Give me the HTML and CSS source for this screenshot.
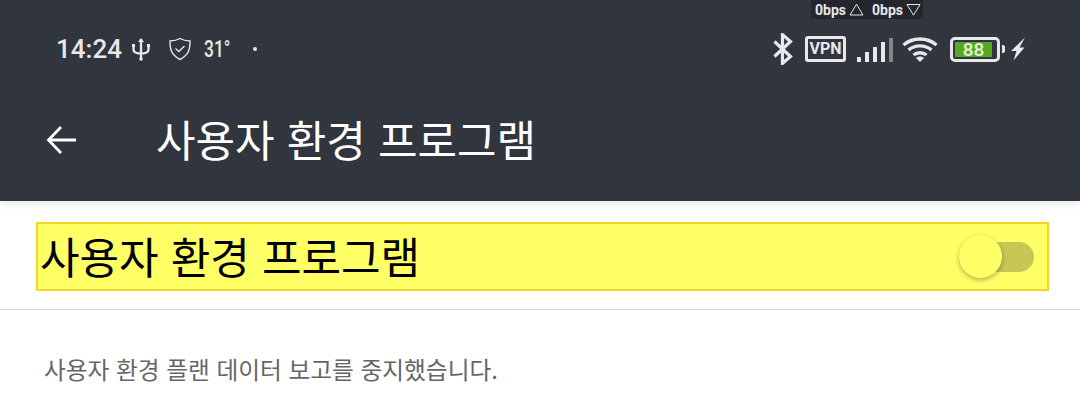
FILE: index.html
```html
<!DOCTYPE html>
<html lang="ko">
<head>
  <meta charset="UTF-8">
  <title>사용자 환경 프로그램</title>
  <link rel="stylesheet" href="styles.css">
</head>
<body>
  <header class="appbar">
    <div class="speed">
      <span>0bps</span>
      <svg width="15" height="13" viewBox="0 0 15 13"><path d="M7.500 1.200 14 12H1z" fill="none" stroke="#e8e8ea" stroke-width="1"/></svg>
      <span class="speed-down">0bps</span>
      <svg width="15" height="13" viewBox="0 0 15 13"><path d="M1 1.500h13L7.500 12.200z" fill="none" stroke="#e8e8ea" stroke-width="1"/></svg>
    </div>
    <div class="status">
      <div class="status-left">
        <span class="clock">14:24</span>
        <svg class="usb" width="20" height="24" viewBox="0 0 20 24"><path d="M10 2v20M2.500 8v4.500c0 3 2.500 4 7.500 4s7.500-1 7.500-4V8" fill="none" stroke="#e8e8ea" stroke-width="2.300"/><path d="M10 1l3 4H7zM1 7h3v3H1zM16 7h3v3h-3z" fill="#e8e8ea"/><circle cx="10" cy="22" r="1.800" fill="#e8e8ea"/></svg>
        <svg class="shield" width="24" height="24" viewBox="0 0 24 24"><path d="M12 1.500c3 1.700 6 2.300 10 2.500 0 8-1 14-10 18.500C3 18 2 12 2 4c4-.2 7-.8 10-2.500z" fill="none" stroke="#e8e8ea" stroke-width="1.400"/><path d="M7.500 11.500l3.300 3 5.700-5.500" fill="none" stroke="#e8e8ea" stroke-width="1.400"/></svg>
        <span class="temp">31°</span>
        <span class="dot"></span>
      </div>
      <div class="status-right">
        <svg width="22" height="32" viewBox="0 0 20 30"><path d="M2 8l15 14-7.500 6.500V1.500L17 8 2 22" fill="none" stroke="#e8e8ea" stroke-width="3"/></svg>
        <span class="vpn">VPN</span>
        <svg class="signal" width="36" height="26" viewBox="0 0 36 26"><path d="M0 21h4v5H0zM8 16h4v10H8zM16 11h4v15h-4zM24 6h4v20h-4z" fill="#e8e8ea"/><path d="M32 2h4v24h-4z" fill="#83868b"/></svg>
        <svg class="wifi" width="36" height="26" viewBox="0 0 36 26"><path d="M1.500 9C11 1 25 1 34.500 9M6.500 14c6.500-5.500 16.500-5.500 23 0M11.500 19c3.500-3 9.500-3 13 0" fill="none" stroke="#e8e8ea" stroke-width="3.300"/><path d="M18 26l-4-4c2-2 6-2 8 0z" fill="#e8e8ea"/></svg>
        <div class="battery"><div class="battery-level">88</div></div>
        <span class="battery-tip"></span>
        <svg class="bolt" width="16" height="24" viewBox="0 0 16 24"><path d="M15 .5L1 14h5.500L3.500 23.500 14.500 10.500H9.500z" fill="#e8e8ea"/></svg>
      </div>
    </div>
    <div class="toolbar">
      <svg class="back" width="32" height="32" viewBox="0 0 32 32"><path d="M30 16H3M15 3L2.500 16 15 29" fill="none" stroke="#fff" stroke-width="2.800"/></svg>
      <h1 class="title">사용자 환경 프로그램</h1>
    </div>
  </header>

  <section class="switch-row">
    <div class="switch-bar">
      <span class="switch-label">사용자 환경 프로그램</span>
      <div class="switch">
        <span class="switch-track"></span>
        <span class="switch-thumb"></span>
      </div>
    </div>
  </section>

  <p class="summary">사용자 환경 플랜 데이터 보고를 중지했습니다.</p>
</body>
</html>
```

FILE: styles.css
```css
* {
  box-sizing: border-box;
}

body {
  margin: 0;
  height: 411px;
  overflow: hidden;
  background-color: #fff;
  font-family: "Noto Sans CJK KR", "Noto Sans", sans-serif;
}

.appbar {
  position: relative;
  height: 201px;
  padding-top: 29px;
  background-color: #31353e;
  box-shadow: 0 2px 8px rgba(0, 0, 0, 0.12);
}

.speed {
  position: absolute;
  top: 0;
  left: 811px;
  width: 112px;
  height: 19px;
  display: flex;
  align-items: center;
  padding-left: 4px;
  gap: 3px;
  background-color: #23262c;
  color: #e8e8ea;
  font-family: Roboto, sans-serif;
  font-size: 14px;
  font-weight: 700;
}

.speed-down {
  margin-left: 5px;
}

.status {
  height: 40px;
  display: flex;
  justify-content: space-between;
  align-items: center;
  padding: 0 54px 0 56px;
  color: #e8e8ea;
}

.status-left,
.status-right {
  display: flex;
  align-items: center;
}

.clock {
  font-family: Roboto, sans-serif;
  font-size: 26px;
  font-weight: 500;
}

.usb {
  margin-left: 9px;
}

.shield {
  margin-left: 17px;
}

.temp {
  width: 27px;
  margin-left: 12px;
  font-family: Roboto, sans-serif;
  font-size: 23px;
  font-weight: 500;
  transform: scaleX(0.76);
  transform-origin: left center;
  white-space: nowrap;
}

.dot {
  width: 4px;
  height: 4px;
  margin-left: 22px;
  border-radius: 50%;
  background-color: #e8e8ea;
}

.vpn {
  width: 41px;
  height: 26px;
  margin-left: 11px;
  border: 3px solid #e8e8ea;
  border-radius: 3px;
  font-family: Roboto, sans-serif;
  font-size: 16px;
  font-weight: 700;
  line-height: 20px;
  text-align: center;
}

.signal {
  margin-left: 11px;
}

.wifi {
  margin-left: 9px;
}

.battery {
  width: 50px;
  height: 25px;
  margin-left: 12px;
  padding: 2px;
  border: 3px solid #e8e8ea;
  border-radius: 5px;
}

.battery-level {
  width: 37px;
  height: 15px;
  background-color: #55aa22;
  color: #e4f5d8;
  font-family: Roboto, sans-serif;
  font-size: 19px;
  font-weight: 500;
  line-height: 15px;
  text-align: center;
}

.battery-tip {
  width: 3px;
  height: 8px;
  margin-left: 2px;
  border-radius: 0 2px 2px 0;
  background-color: #e8e8ea;
}

.bolt {
  margin-left: 5px;
}

.toolbar {
  height: 100px;
  margin-top: 21px;
  display: flex;
  align-items: center;
  padding-left: 46px;
}

.back {
  flex-shrink: 0;
}

.title {
  margin: -3px 0 0 78px;
  color: #fff;
  font-size: 43px;
  font-weight: 400;
  line-height: 1;
}

.switch-row {
  height: 109px;
  padding: 21px 31px 0 36px;
  border-bottom: 1px solid #dcdcdc;
}

.switch-bar {
  height: 69px;
  display: flex;
  align-items: center;
  justify-content: space-between;
  padding: 0 13px 0 2px;
  border: 2px solid #f5d327;
  background-color: #ffff66;
}

.switch-label {
  margin-top: -3px;
  color: #000;
  font-size: 43px;
  line-height: 1;
}

.switch {
  position: relative;
  width: 75px;
  height: 44px;
}

.switch-track {
  position: absolute;
  top: 7px;
  right: 0;
  width: 64px;
  height: 30px;
  border-radius: 15px;
  background-color: #c6c754;
}

.switch-thumb {
  position: absolute;
  top: 0;
  left: 0;
  width: 43px;
  height: 43px;
  border-radius: 50%;
  background-color: #ffff66;
  box-shadow: 0 2px 5px rgba(0, 0, 0, 0.3);
}

.summary {
  margin: 42px 0 0 44px;
  color: #666;
  font-size: 23.700px;
  line-height: 34px;
}
```
